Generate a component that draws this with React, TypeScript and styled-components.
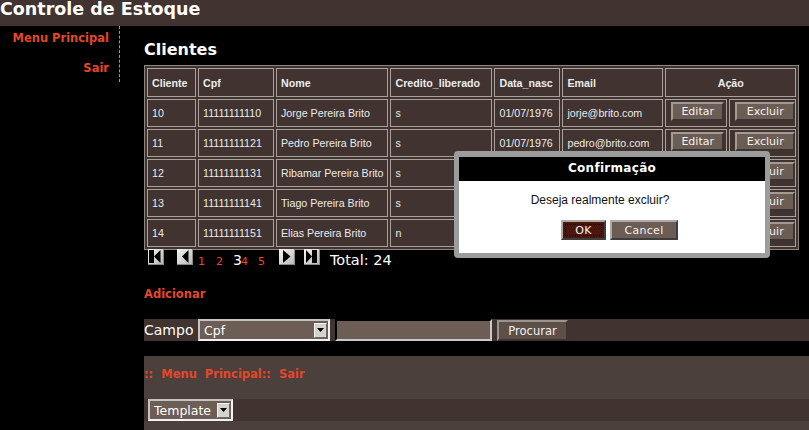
import React from 'react';
import styled, { createGlobalStyle } from 'styled-components';

const Global = createGlobalStyle`
  html, body { margin: 0; padding: 0; background: #000; overflow: hidden; }
  body { font-family: "DejaVu Sans", Verdana, sans-serif; color: #fff; }
`;

const RED = '#e5472a';
const BROWN = '#403330';

const Page = styled.div`
  position: relative;
  width: 809px;
  min-height: 430px;
`;

const TopBar = styled.header`
  background: ${BROWN};
  height: 26px;
`;

const Title = styled.h1`
  margin: 0;
  font: bold 17.5px/18px "DejaVu Sans", sans-serif;
  color: #fff;
  white-space: nowrap;
`;

const Layout = styled.div`
  display: flex;
  align-items: flex-start;
`;

const Sidebar = styled.nav`
  width: 120px;
  box-sizing: border-box;
  border-right: 1px dashed #9a9a9a;
  padding: 5px 10px 6px 0;
  display: flex;
  flex-direction: column;
  align-items: flex-end;
  gap: 15px;
`;

const RedLink = styled.a`
  display: block;
  color: ${RED};
  font: bold 11.5px/15px "DejaVu Sans", sans-serif;
  text-decoration: none;
  white-space: pre;
`;

const Main = styled.main`
  margin-left: 24px;
  flex: 1;
  min-width: 0;
`;

const Heading = styled.h2`
  margin: 0 0 5px;
  padding-top: 14px;
  font: bold 16px/20px "DejaVu Sans", sans-serif;
  color: #fff;
`;

const Grid = styled.table`
  border-collapse: separate;
  border-spacing: 2px;
  border: 1px solid #8d8580;
  background: ${BROWN};
  table-layout: fixed;
`;

const cellBase = `
  box-sizing: border-box;
  padding: 0 4px;
  border: 1px solid #aaa19b;
  font-family: "Liberation Sans", Arial, sans-serif;
  font-size: 10.67px;
  color: #ececec;
  white-space: nowrap;
  overflow: hidden;
  vertical-align: middle;
`;

const Col = styled.col<{ $w: number }>`
  width: ${p => p.$w}px;
`;

const HeadCell = styled.th<{ $center?: boolean }>`
  ${cellBase}
  height: 29px;
  font-weight: bold;
  text-align: ${p => (p.$center ? 'center' : 'left')};
`;

const Cell = styled.td<{ $action?: boolean }>`
  ${cellBase}
  height: 28px;
  padding: ${p => (p.$action ? '0 0 0 5px' : '0 4px')};
`;

const RowButton = styled.button<{ $w: number }>`
  box-sizing: border-box;
  width: ${p => p.$w}px;
  height: 19px;
  padding: 0;
  margin-top: -3px;
  background: #6b5c54;
  color: #f2f2f2;
  font: 11px "DejaVu Sans", sans-serif;
  border: 2px solid;
  border-color: #a39a94 #3a3533 #3a3533 #a39a94;
  display: block;
`;

const Pager = styled.div`
  display: flex;
  align-items: baseline;
  height: 16px;
  margin-top: -1px;
  padding-left: 4px;
`;

const PagerIcon = styled.svg<{ $ml: number }>`
  width: 16px;
  height: 16px;
  margin-left: ${p => p.$ml}px;
  display: block;
`;

const PageNum = styled.a<{ $ml: number; $current?: boolean }>`
  margin-left: ${p => p.$ml}px;
  color: ${p => (p.$current ? '#fff' : RED)};
  font: ${p => (p.$current ? '14px' : '11px')} "DejaVu Sans", sans-serif;
  text-decoration: none;
`;

const Total = styled.span`
  margin-left: 10px;
  font: 14.5px "DejaVu Sans", sans-serif;
  color: #fff;
`;

const AddLink = styled(RedLink)`
  margin-top: 21px;
  line-height: 16px;
`;

const SearchBar = styled.div`
  display: flex;
  align-items: center;
  gap: 5px;
  height: 22px;
  margin-top: 17px;
  background: ${BROWN};
`;

const Label = styled.span`
  font: 14px "DejaVu Sans", sans-serif;
  color: #fff;
  width: 49px;
  white-space: nowrap;
`;

const FakeSelect = styled.div<{ $w: number }>`
  box-sizing: border-box;
  width: ${p => p.$w}px;
  height: 22px;
  display: flex;
  align-items: center;
  justify-content: space-between;
  padding: 0 1px 0 4px;
  background: #6c5d55;
  border: 2px solid;
  border-color: #c4c4c4 #f2f2f2 #f2f2f2 #c4c4c4;
  font: 12.5px "DejaVu Sans", sans-serif;
  color: #fff;
  white-space: nowrap;
`;

const Arrow = styled.span`
  box-sizing: border-box;
  width: 13px;
  height: 15px;
  background: #d6d3ce;
  border: 1px solid;
  border-color: #f4f4f4 #6a6a6a #6a6a6a #f4f4f4;
  display: flex;
  align-items: center;
  justify-content: center;
  flex: none;
`;

const TextInput = styled.input`
  box-sizing: border-box;
  width: 157px;
  height: 22px;
  background: #6c5d55;
  border: 2px solid;
  border-color: #000 #c8c8c8 #c8c8c8 #000;
  color: #fff;
  padding: 0 4px;
  outline: none;
`;

const SearchButton = styled.button`
  box-sizing: border-box;
  width: 71px;
  height: 21px;
  margin-top: 1px;
  background: #5e4f49;
  color: #f2f2f2;
  font: 11.5px "DejaVu Sans", sans-serif;
  border: 2px solid;
  border-color: #9a9390 #3a3533 #3a3533 #9a9390;
  padding: 0;
`;

const Footer = styled.footer`
  margin-top: 15px;
  padding: 11px 0 20px;
  background: #4b403c;
`;

const TemplateBar = styled.div`
  margin-top: 17px;
  height: 22px;
  background: ${BROWN};
  display: flex;
  align-items: center;
  padding-left: 4px;
`;

const Dialog = styled.div`
  position: absolute;
  left: 454px;
  top: 151px;
  width: 316px;
  box-sizing: border-box;
  border: 5px solid #9c9c9c;
  border-top-width: 6px;
  border-radius: 4px;
  background: #fff;
`;

const DialogTitle = styled.div`
  background: #000;
  color: #fff;
  height: 24px;
  text-align: center;
  font: bold 12px/23px "DejaVu Sans", sans-serif;
  letter-spacing: 0.3px;
`;

const DialogBody = styled.div`
  padding: 11px 0 13px;
  display: flex;
  flex-direction: column;
  align-items: center;
  gap: 12px;
`;

const DialogText = styled.p`
  margin: 0;
  padding-right: 24px;
  font: 12px/16px "Liberation Sans", Arial, sans-serif;
  color: #111;
`;

const DialogButtons = styled.div`
  display: flex;
  gap: 4px;
  padding-left: 15px;
`;

const DialogButton = styled.button<{ $primary?: boolean; $w: number }>`
  box-sizing: border-box;
  width: ${p => p.$w}px;
  height: 20px;
  padding: 0;
  background: ${p => (p.$primary ? '#4a170d' : '#6b5c54')};
  color: #f4f4f4;
  font: 11px "DejaVu Sans", sans-serif;
  letter-spacing: 0.3px;
  border: 2px solid;
  border-color: #b0aaa6 #3e3e3e #3e3e3e #b0aaa6;
  outline: ${p => (p.$primary ? '1px dotted #000' : 'none')};
  outline-offset: -5px;
`;

const IconBg: React.FC = () => (
  <>
    <defs>
      <linearGradient id="pg" x1="0" y1="0" x2="1" y2="1">
        <stop offset="0" stopColor="#f6f6f6" />
        <stop offset="1" stopColor="#b4b4b4" />
      </linearGradient>
    </defs>
    <rect x="0" y="0" width="16" height="16" fill="url(#pg)" />
    <rect x="15" y="0" width="1" height="16" fill="#8a8a8a" />
    <rect x="0" y="15" width="16" height="1" fill="#8a8a8a" />
  </>
);

type IconKind = 'first' | 'prev' | 'next' | 'last';

const PagerGlyph: React.FC<{ kind: IconKind; ml: number }> = ({ kind, ml }) => (
  <PagerIcon $ml={ml} viewBox="0 0 16 16">
    <IconBg />
    {kind === 'first' && (
      <>
        <rect x="1" y="1" width="5" height="13" fill="#000" />
        <polygon points="12.5,1 6,7.5 12.5,14" fill="#000" />
      </>
    )}
    {kind === 'prev' && <polygon points="11.5,1 5,7.5 11.5,14" fill="#000" />}
    {kind === 'next' && <polygon points="4,1 11.5,7.5 4,14" fill="#000" />}
    {kind === 'last' && (
      <>
        <polygon points="2,1 8,7.5 2,14" fill="#000" />
        <rect x="8" y="1" width="5" height="13" fill="#000" />
      </>
    )}
  </PagerIcon>
);

const SelectArrow: React.FC = () => (
  <Arrow>
    <svg width="7" height="4" viewBox="0 0 7 4">
      <polygon points="0,0 7,0 3.5,4" fill="#000" />
    </svg>
  </Arrow>
);

const widths = [49, 76, 111, 102, 66, 100, 62, 67];

const rows = [
  ['10', '11111111110', 'Jorge Pereira Brito', 's', '01/07/1976', 'jorje@brito.com'],
  ['11', '11111111121', 'Pedro Pereira Brito', 's', '01/07/1976', 'pedro@brito.com'],
  ['12', '11111111131', 'Ribamar Pereira Brito', 's', '01/07/1976', 'ribamar@brito.com'],
  ['13', '11111111141', 'Tiago Pereira Brito', 's', '01/07/1976', 'tiago@brito.com'],
  ['14', '11111111151', 'Elias Pereira Brito', 'n', '01/07/1976', 'elias@brito.com'],
];

const headers = ['Cliente', 'Cpf', 'Nome', 'Credito_liberado', 'Data_nasc', 'Email'];

export default function App() {
  return (
    <Page>
      <Global />
      <TopBar>
        <Title>Controle de Estoque</Title>
      </TopBar>
      <Layout>
        <Sidebar>
          <RedLink href="#">Menu Principal</RedLink>
          <RedLink href="#">Sair</RedLink>
        </Sidebar>
        <Main>
          <Heading>Clientes</Heading>
          <Grid>
            <colgroup>
              {widths.map((w, i) => (
                <Col key={i} $w={w} />
              ))}
            </colgroup>
            <thead>
              <tr>
                {headers.map(h => (
                  <HeadCell key={h}>{h}</HeadCell>
                ))}
                <HeadCell colSpan={2} $center>Ação</HeadCell>
              </tr>
            </thead>
            <tbody>
              {rows.map(r => (
                <tr key={r[0]}>
                  {r.map((v, i) => (
                    <Cell key={i}>{v}</Cell>
                  ))}
                  <Cell $action>
                    <RowButton $w={53}>Editar</RowButton>
                  </Cell>
                  <Cell $action>
                    <RowButton $w={60}>Excluir</RowButton>
                  </Cell>
                </tr>
              ))}
            </tbody>
          </Grid>
          <Pager>
            <PagerGlyph kind="first" ml={0} />
            <PagerGlyph kind="prev" ml={13} />
            <PageNum href="#" $ml={5}>1</PageNum>
            <PageNum href="#" $ml={11}>2</PageNum>
            <PageNum $ml={10} $current>3</PageNum>
            <PageNum href="#" $ml={-1}>4</PageNum>
            <PageNum href="#" $ml={10}>5</PageNum>
            <PagerGlyph kind="next" ml={14} />
            <PagerGlyph kind="last" ml={9} />
            <Total>Total: 24</Total>
          </Pager>
          <AddLink href="#">Adicionar</AddLink>
          <SearchBar>
            <Label>Campo</Label>
            <FakeSelect $w={132}>
              <span>Cpf</span>
              <SelectArrow />
            </FakeSelect>
            <TextInput type="text" />
            <SearchButton>Procurar</SearchButton>
          </SearchBar>
          <Footer>
            <RedLink href="#">{'::  Menu  Principal::  Sair'}</RedLink>
            <TemplateBar>
              <FakeSelect $w={85}>
                <span>Template</span>
                <SelectArrow />
              </FakeSelect>
            </TemplateBar>
          </Footer>
        </Main>
      </Layout>
      <Dialog>
        <DialogTitle>Confirmação</DialogTitle>
        <DialogBody>
          <DialogText>Deseja realmente excluir?</DialogText>
          <DialogButtons>
            <DialogButton $primary $w={45}>OK</DialogButton>
            <DialogButton $w={68}>Cancel</DialogButton>
          </DialogButtons>
        </DialogBody>
      </Dialog>
    </Page>
  );
}
